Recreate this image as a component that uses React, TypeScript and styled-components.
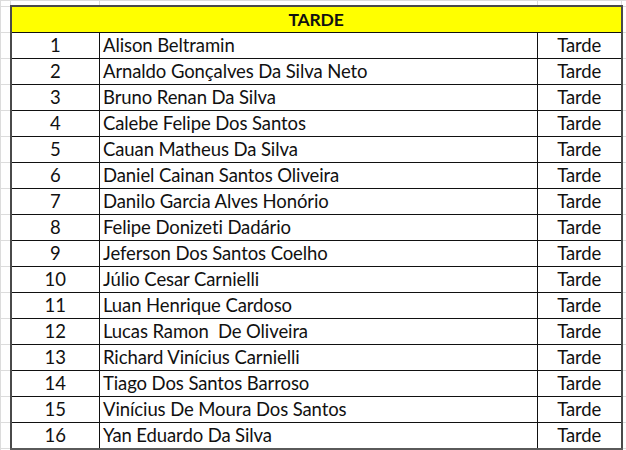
import React from 'react'
import styled, { createGlobalStyle } from 'styled-components'

const GlobalStyle = createGlobalStyle`
  html, body {
    margin: 0;
    padding: 0;
    background: #ffffff;
  }
  body {
    font-family: Lato, "Liberation Sans", sans-serif;
    color: #111;
  }
`

const Sheet = styled.table`
  border-collapse: collapse;
  table-layout: fixed;
  width: 626px;
`

const Gap = styled.td<{ $h?: number }>`
  height: ${({ $h }) => $h ?? 25}px;
  padding: 0;
  border: 1px solid #dcdcdc;
`

const Header = styled.td`
  height: 25px;
  padding: 0;
  background: #ffff00;
  border: 2px solid #4a4a4a;
  border-bottom: 1px solid #111;
  text-align: center;
  vertical-align: middle;
  font-weight: 700;
  font-size: 17.5px;
  letter-spacing: -0.2px;
`

const Cell = styled.td<{ $align?: string; $last?: boolean; $edge?: 'left' | 'right' }>`
  box-sizing: border-box;
  height: 26px;
  padding: 0 0 3px ${({ $align }) => ($align === 'left' ? '3px' : '0')};
  border: 1px solid #111;
  border-left: ${({ $edge }) => ($edge === 'left' ? '2px solid #4a4a4a' : '1px solid #111')};
  border-right: ${({ $edge }) => ($edge === 'right' ? '2px solid #4a4a4a' : '1px solid #111')};
  border-bottom: ${({ $last }) => ($last ? '2px solid #5a5a5a' : '1px solid #111')};
  text-align: ${({ $align }) => $align ?? 'center'};
  vertical-align: bottom;
  font-size: 18.5px;
  line-height: 19px;
  letter-spacing: -0.1px;
  white-space: pre;
  overflow: hidden;
`

const names = [
  'Alison Beltramin',
  'Arnaldo Gonçalves Da Silva Neto',
  'Bruno Renan Da Silva',
  'Calebe Felipe Dos Santos',
  'Cauan Matheus Da Silva',
  'Daniel Cainan Santos Oliveira',
  'Danilo Garcia Alves Honório',
  'Felipe Donizeti Dadário',
  'Jeferson Dos Santos Coelho',
  'Júlio Cesar Carnielli',
  'Luan Henrique Cardoso',
  'Lucas Ramon  De Oliveira',
  'Richard Vinícius Carnielli',
  'Tiago Dos Santos Barroso',
  'Vinícius De Moura Dos Santos',
  'Yan Eduardo Da Silva',
]

export default function App() {
  return (
    <>
      <GlobalStyle />
      <Sheet>
        <colgroup>
          <col style={{ width: 10 }} />
          <col style={{ width: 89 }} />
          <col style={{ width: 438 }} />
          <col style={{ width: 84 }} />
          <col style={{ width: 5 }} />
        </colgroup>
        <tbody>
          <tr>
            <Gap $h={4} />
            <Gap $h={4} />
            <Gap $h={4} />
            <Gap $h={4} />
            <Gap $h={4} />
          </tr>
          <tr>
            <Gap />
            <Header colSpan={3}>TARDE</Header>
            <Gap />
          </tr>
          {names.map((name, i) => (
            <tr key={i}>
              <Gap />
              <Cell $edge="left" $last={i === names.length - 1}>{i + 1}</Cell>
              <Cell $align="left" $last={i === names.length - 1}>{name}</Cell>
              <Cell $edge="right" $last={i === names.length - 1}>Tarde</Cell>
              <Gap />
            </tr>
          ))}
          <tr>
            <Gap $h={4} />
            <Gap $h={4} />
            <Gap $h={4} />
            <Gap $h={4} />
            <Gap $h={4} />
          </tr>
        </tbody>
      </Sheet>
    </>
  )
}
